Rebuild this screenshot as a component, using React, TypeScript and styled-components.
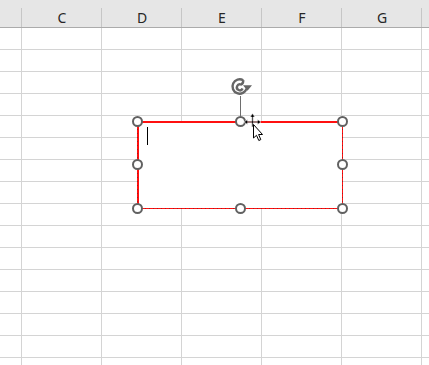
import React from 'react';
import styled, { createGlobalStyle } from 'styled-components';

const GlobalStyle = createGlobalStyle`
  html, body {
    margin: 0;
    padding: 0;
    background: #ffffff;
  }
  body {
    font-family: "Noto Sans", "Open Sans", Arial, sans-serif;
  }
`;

const Sheet = styled.div`
  position: relative;
  width: 429px;
  height: 365px;
  overflow: hidden;
  background: #ffffff;
`;

const Grid = styled.div`
  display: grid;
  grid-template-columns: 22px repeat(6, 80px);
  grid-template-rows: 28px repeat(16, 22px);
`;

const HeaderCell = styled.div`
  position: relative;
  box-sizing: border-box;
  background: #e6e6e6;
  border-bottom: 1px solid #ababab;
  padding-top: 8px;
  display: flex;
  align-items: center;
  justify-content: center;
  font-size: 14px;
  color: #262626;
  line-height: 1;

  &::after {
    content: '';
    position: absolute;
    right: 0;
    top: 8px;
    bottom: 0;
    width: 1px;
    background: #c6c6c6;
  }
`;

const Cell = styled.div`
  box-sizing: border-box;
  border-right: 1px solid #d4d4d4;
  border-bottom: 1px solid #d4d4d4;
`;

const Overlay = styled.svg`
  position: absolute;
  left: 0;
  top: 0;
  pointer-events: none;
`;

const columns = ['', 'C', 'D', 'E', 'F', 'G', ''];
const rowCount = 16;

const handles: [number, number][] = [
  [137.5, 121.5],
  [240.5, 121.5],
  [342.5, 121.5],
  [137.5, 164.5],
  [342.5, 164.5],
  [137.5, 208.5],
  [240.5, 208.5],
  [342.5, 208.5],
];

const App: React.FC = () => {
  return (
    <>
      <GlobalStyle />
      <Sheet>
        <Grid>
          {columns.map((c, i) => (
            <HeaderCell key={'h' + i}>{c}</HeaderCell>
          ))}
          {Array.from({ length: rowCount * columns.length }).map((_, i) => (
            <Cell key={i} />
          ))}
        </Grid>

        <Overlay width={429} height={365} viewBox="0 0 429 365" shapeRendering="crispEdges">
          <rect x={139} y={123} width={203} height={85} fill="#ffffff" />
          {/* red dotted frame */}
          <rect x={137} y={121} width={206} height={2} fill="#ff1010" />
          <rect x={137} y={208} width={206} height={1} fill="#ff1010" />
          <rect x={137} y={121} width={2} height={88} fill="#ff1010" />
          <rect x={342} y={121} width={1} height={88} fill="#ff1010" />
          <g stroke="#a02020" strokeWidth={1} strokeDasharray="1 3">
            <line x1={137} y1={208.5} x2={343} y2={208.5} />
            <line x1={342.5} y1={121} x2={342.5} y2={209} />
            <line x1={137.5} y1={121} x2={137.5} y2={209} />
          </g>

          {/* text caret */}
          <rect x={147} y={127} width={1} height={18} fill="#000" />

          {/* rotate handle */}
          <rect x={240} y={96} width={1} height={20} fill="#6e6e6e" />
          <g fill="none" stroke="#666666" strokeWidth={2.4} shapeRendering="geometricPrecision">
            <path d="M243.2 80.2 A7.2 7.2 0 1 0 246.6 88.5" />
            <path d="M243.2 80.2 Q243.5 84 241 84.5 A3 3 0 1 0 242.6 88.6" />
          </g>
          <path d="M243 85.2 L252 85.2 L247.5 90.8 Z" fill="#666666" shapeRendering="geometricPrecision" />

          {/* resize handles */}
          <g shapeRendering="geometricPrecision">
            {handles.map(([x, y], i) => (
              <circle key={i} cx={x} cy={y} r={4.5} fill="#ffffff" stroke="#616161" strokeWidth={2} />
            ))}
          </g>

          {/* move cursor */}
          <path
            d="M252.5 113.5 L255 117 L253.2 117 L253.2 121.3 L257.5 121.3 L257.5 119.5 L261 122 L257.5 124.5 L257.5 122.7 L253.2 122.7 L253.2 127 L251.8 127 L251.8 122.7 L247.5 122.7 L247.5 124.5 L244 122 L247.5 119.5 L247.5 121.3 L251.8 121.3 L251.8 117 L250 117 Z"
            fill="#000"
            stroke="#fff"
            strokeWidth={0.6}
            shapeRendering="geometricPrecision"
          />
          {/* arrow pointer */}
          <path
            d="M253.5 124.5 L253.5 138 L256.5 135.3 L258.8 140.5 L260.8 139.6 L258.6 134.5 L262.5 134.5 Z"
            fill="#ffffff"
            stroke="#000000"
            strokeWidth={1}
            shapeRendering="geometricPrecision"
          />
        </Overlay>
      </Sheet>
    </>
  );
};

export default App;
